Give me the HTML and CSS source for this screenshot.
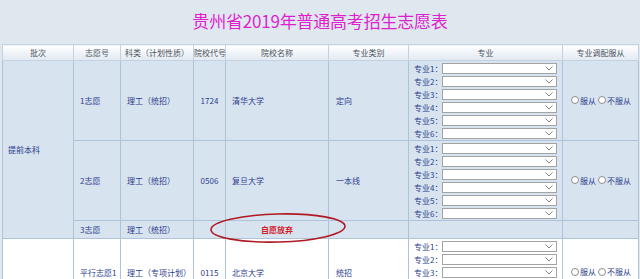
FILE: index.html
```html
<!DOCTYPE html>
<html lang="zh-CN">
<head>
  <meta charset="UTF-8">
  <title>贵州省2019年普通高考招生志愿表</title>
  <link rel="stylesheet" href="styles.css">
</head>
<body>
  <div class="page">
    <h1 class="title">贵州省2019年普通高考招生志愿表</h1>

    <div class="sheet">
      <table class="form">
        <colgroup>
          <col style="width:71px"><col style="width:47px"><col style="width:73px"><col style="width:32px">
          <col style="width:103px"><col style="width:80px"><col style="width:154px"><col style="width:76px">
        </colgroup>
        <thead>
          <tr>
            <th>批次</th><th>志愿号</th><th>科类（计划性质）</th><th>院校代号</th>
            <th>院校名称</th><th>专业类别</th><th>专业</th><th>专业调配服从</th>
          </tr>
        </thead>
        <tbody>
          <!-- 提前本科 -->
          <tr class="row-blue">
            <td rowspan="3" class="batch">提前本科</td>
            <td>1志愿</td><td>理工（统招）</td><td class="code">1724</td><td>清华大学</td><td class="kind">定向</td>
            <td class="majors" data-count="6"></td>
            <td class="adjust"></td>
          </tr>
          <tr class="row-blue">
            <td>2志愿</td><td>理工（统招）</td><td class="code">0506</td><td>复旦大学</td><td class="kind">一本线</td>
            <td class="majors" data-count="6"></td>
            <td class="adjust"></td>
          </tr>
          <tr class="row-blue row-short">
            <td>3志愿</td><td>理工（统招）</td><td></td><td class="giveup">自愿放弃</td><td></td><td></td><td></td>
          </tr>
          <!-- 本科一批 -->
          <tr class="row-white">
            <td></td>
            <td>平行志愿1</td><td>理工（专项计划）</td><td class="code">0115</td><td>北京大学</td><td class="kind">统招</td>
            <td class="majors" data-count="5"></td>
            <td class="adjust"></td>
          </tr>
        </tbody>
      </table>

      <!-- red hand-drawn mark around 自愿放弃 -->
      <svg class="mark" width="150" height="36" viewBox="0 0 150 36">
        <ellipse cx="73" cy="18" rx="67" ry="14" fill="none" stroke="#b01a24" stroke-width="1.6" transform="rotate(-1.5 73 18)"/>
      </svg>
    </div>
  </div>

  <script>
    // fill the 专业 selects and 服从 radios
    let group = 0;
    document.querySelectorAll('.majors').forEach(cell => {
      const n = +cell.dataset.count;
      let html = '';
      for (let i = 1; i <= n; i++) {
        html += '<div class="major"><span class="lbl">专业' + i + '：</span>' +
          '<span class="sel"><svg width="8" height="5" viewBox="0 0 8 5"><path d="M0.5 0.5 L4 4 L7.5 0.5" fill="none" stroke="#777" stroke-width="0.9"/></svg></span></div>';
      }
      cell.innerHTML = html;
    });
    document.querySelectorAll('.adjust').forEach(cell => {
      group++;
      cell.innerHTML = '<label><input type="radio" name="adj' + group + '">服从</label>' +
        '<label><input type="radio" name="adj' + group + '">不服从</label>';
    });
  </script>
</body>
</html>
```

FILE: styles.css
```css
body {
  margin: 0;
  background: #dfe7ef;
  font-family: "Noto Sans CJK SC", "Noto Sans", sans-serif;
  overflow: hidden;
}
.page {
  padding: 0 2px;
}
.title {
  margin: 0;
  height: 44px;
  line-height: 42px;
  text-align: center;
  font-size: 17px;
  font-weight: normal;
  color: #de1fd0;
  letter-spacing: -0.2px;
}
.sheet {
  position: relative;
}
.form {
  table-layout: fixed;
  width: 636px;
  border-collapse: collapse;
  font-size: 8px;
  color: #2d3d8e;
}
.form th,
.form td {
  border: 1px solid #aec3d9;
  padding: 0 0 0 6px;
  white-space: nowrap;
  overflow: hidden;
  vertical-align: middle;
  text-align: left;
}
.form th {
  height: 15px;
  padding: 0;
  text-align: center;
  font-weight: normal;
  color: #4d5560;
  background: linear-gradient(#ffffff, #edf2f7 60%, #e2e9f0);
  border-color: #c3d2e2;
}
.row-blue td {
  background: #d7e3ef;
}
.row-white td {
  background: #ffffff;
}
.row-short td {
  height: 17px;
}
.form td.batch {
  padding-left: 5px;
}
.form td.code {
  padding: 0;
  text-align: center;
}
.form td.kind {
  padding-left: 7px;
}
.form td.giveup {
  padding: 0;
  text-align: center;
  color: #d3202c;
  font-weight: bold;
}
.form td.majors {
  padding: 2px 0 1px 5px;
}
.major {
  display: flex;
  align-items: center;
  height: 11px;
  margin-bottom: 2px;
}
.major:last-child {
  margin-bottom: 0;
}
.lbl {
  width: 28px;
  line-height: 11px;
}
.sel {
  box-sizing: border-box;
  width: 115px;
  height: 11px;
  background: #ffffff;
  border: 1px solid #a3a3a3;
  display: flex;
  align-items: center;
  justify-content: flex-end;
  padding-right: 3px;
}
.form td.adjust {
  padding: 0 0 0 8px;
}
.adjust label {
  display: inline-flex;
  align-items: center;
  margin-right: 2px;
}
.adjust input {
  appearance: none;
  width: 8px;
  height: 8px;
  margin: 0 1px 0 0;
  border: 1px solid #8d8d8d;
  border-radius: 50%;
  background: #ffffff;
}
.mark {
  position: absolute;
  left: 203px;
  top: 166px;
}
```
